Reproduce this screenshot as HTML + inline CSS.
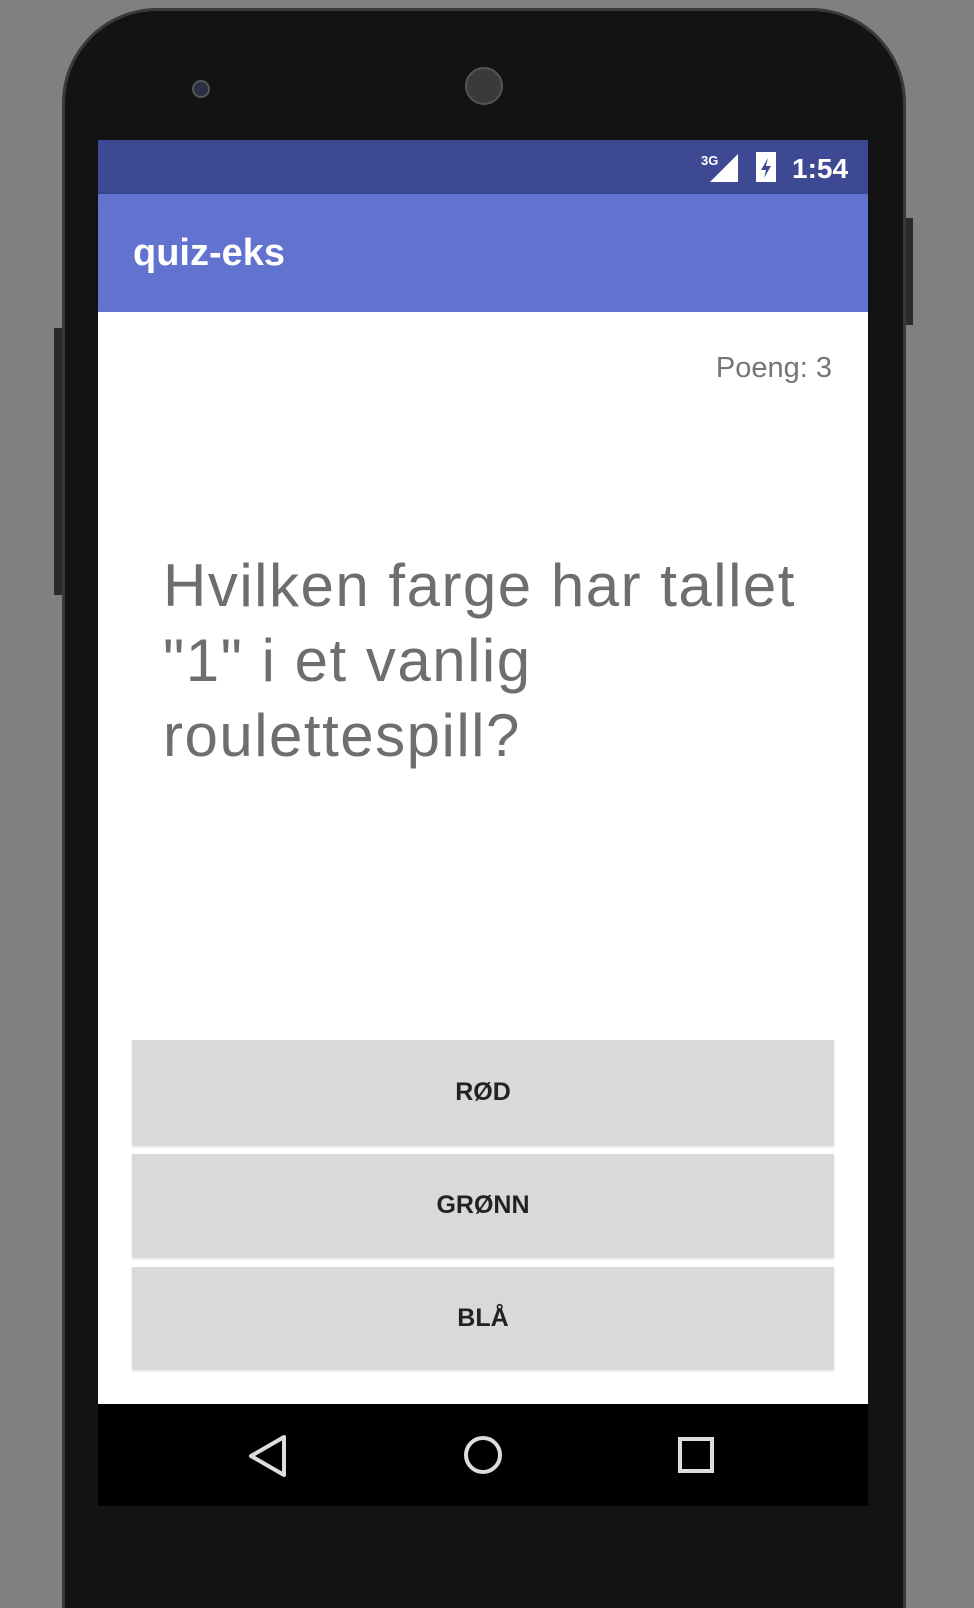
<!DOCTYPE html>
<html><head><meta charset="utf-8"><style>
*{margin:0;padding:0;box-sizing:border-box}
html,body{width:974px;height:1564px;overflow:hidden;background:#808080;font-family:"Liberation Sans",sans-serif}
.phone{position:absolute;left:62px;top:8px;width:844px;height:1600px;background:#131313;border-radius:95px 95px 0 0;border:3px solid #3a3a3a;border-bottom:none}
.btnside{position:absolute;background:#2a2a2a}
.screen{position:absolute;left:98px;top:140px;width:770px}
.status{height:54px;background:#3d4a93;position:relative}
.bar{height:118px;background:#6272cf;position:relative;box-shadow:0 4px 8px rgba(0,0,0,.3)}
.bar span{position:absolute;left:35px;top:38px;color:#fff;font-size:38px;font-weight:bold}
.content{height:1092px;background:#fff;position:relative}
.poeng{position:absolute;right:36px;top:40px;font-size:29px;color:#757575}
.q{position:absolute;left:65px;top:236px;width:720px;font-size:60px;line-height:75px;color:#6e6e6e;letter-spacing:1.5px;white-space:nowrap}
.b{position:absolute;left:34px;width:702px;background:#d9d9d9;color:#222;font-size:25px;font-weight:bold;text-align:center;box-shadow:0 2px 2px rgba(0,0,0,.15)}
.nav{height:102px;background:#000;position:relative}
</style></head><body>
<div class="btnside" style="left:906px;top:218px;width:7px;height:107px"></div>
<div class="btnside" style="left:54px;top:328px;width:8px;height:267px"></div>
<div class="phone"></div>
<div style="position:absolute;left:192px;top:80px;width:18px;height:18px;border-radius:50%;background:#2b2f45;border:2px solid #555"></div>
<div style="position:absolute;left:465px;top:67px;width:38px;height:38px;border-radius:50%;background:#3a3a3a;border:2px solid #555"></div>
<div class="screen">
<div class="status">
<svg style="position:absolute;left:600px;top:10px" width="160" height="36">
<text x="3" y="15" font-size="13" fill="#fff" font-family="Liberation Sans" font-weight="bold">3G</text>
<polygon points="40,4 40,32 12,32" fill="#fff"/>
<rect x="58" y="2" width="20" height="30" fill="#fff"/>
<polygon points="70,8 63,20 68,20 66,28 73,16 68,16" fill="#3d4a93"/>
<text x="94" y="28" font-size="28" fill="#fff" font-family="Liberation Sans" font-weight="bold">1:54</text>
</svg>
</div>
<div class="bar"><span>quiz-eks</span></div>
<div class="content">
<div class="poeng">Poeng: 3</div>
<div class="q">Hvilken farge har tallet<br>"1" i et vanlig<br>roulettespill?</div>
<div class="b" style="top:728px;height:105px;line-height:105px">RØD</div>
<div class="b" style="top:842px;height:103px;line-height:103px">GRØNN</div>
<div class="b" style="top:955px;height:102px;line-height:102px">BLÅ</div>
</div>
<div class="nav">
<svg width="770" height="102">
<polygon points="186,33 153,52 186,71" fill="none" stroke="#ddd" stroke-width="4" stroke-linejoin="round"/>
<circle cx="385" cy="51" r="17" fill="none" stroke="#ddd" stroke-width="4"/>
<rect x="582" y="35" width="32" height="32" fill="none" stroke="#ddd" stroke-width="4"/>
</svg>
</div>
</div>
</body></html>
